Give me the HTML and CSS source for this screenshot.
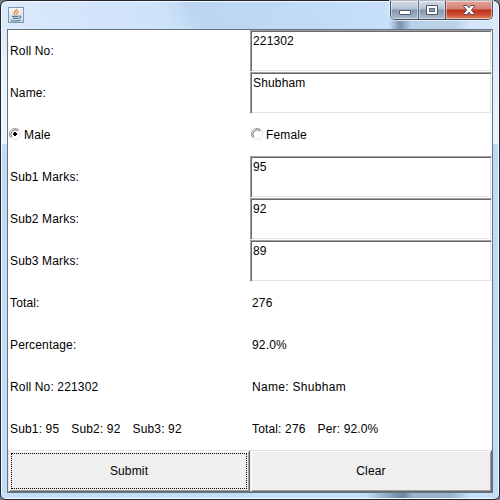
FILE: index.html
```html
<!DOCTYPE html>
<html lang="en">
<head>
<meta charset="utf-8">
<title>Student Marks</title>
<link rel="stylesheet" href="styles.css">
</head>
<body>
<div class="window">
  <header class="titlebar">
    <svg class="app-icon" width="16" height="16" viewBox="0 0 16 16">
      <defs><linearGradient id="tile" x1="0" y1="0" x2="0" y2="1"><stop offset="0" stop-color="#f8fafb"/><stop offset="1" stop-color="#c3d5e0"/></linearGradient></defs>
      <rect x=".5" y=".5" width="15" height="15" fill="url(#tile)" stroke="#8199aa"/>
      <path d="M8.8 1.8C9.3 4 5.3 4.6 6.2 6.5L7.3 8M10.8 4C7.8 5.3 9.8 6 8.5 7.6" fill="none" stroke="#ee7d24" stroke-width="1.2"/>
      <path d="M4 9.4h6.5M5 11.4h5M11 9c2.5-.4 2 1.8-.2 2.2M3 13.4c2 .8 7.5.8 9.5-.3" fill="none" stroke="#567a95" stroke-width="1.1"/>
    </svg>
    <div class="controls">
      <div class="control minimize">
        <svg width="14" height="12" viewBox="0 0 14 12"><rect x="1.5" y="6.5" width="11" height="4" rx=".5" fill="#fff" stroke="#555c6b"/></svg>
      </div>
      <div class="control maximize">
        <svg width="14" height="12" viewBox="0 0 14 12"><path d="M1.5 1.5h11v9h-11zM4.5 4.5v3h5v-3z" fill="#fff" fill-rule="evenodd" stroke="#555c6b"/></svg>
      </div>
      <div class="control close">
        <svg width="14" height="12" viewBox="0 0 14 12"><path d="M1.7 1.5h3.4L7 3.7l1.9-2.2h3.4v1L9.4 6l2.9 3.5v1H8.9L7 8.3l-1.9 2.2H1.7v-1L4.6 6 1.7 2.5z" fill="#fff" stroke="#5a4753"/></svg>
      </div>
    </div>
  </header>
  <main class="form">
    <div class="label">Roll No:</div><div class="field">221302</div>
    <div class="label">Name:</div><div class="field">Shubham</div>
    <div class="choice">
      <svg class="radio" width="12" height="12" viewBox="0 0 12 12"><path d="M2 10A5.4 5.4 0 0 1 10 2" fill="none" stroke="#a0a0a0"/><path d="M2.9 9.1A4.4 4.4 0 0 1 9.1 2.9" fill="none" stroke="#696969"/><path d="M10 2A5.4 5.4 0 0 1 2 10" fill="none" stroke="#e3e3e3"/><path d="M5 4h2v1h1v2H7v1H5V7H4V5h1z"/></svg>
      <span>Male</span>
    </div>
    <div class="choice">
      <svg class="radio" width="12" height="12" viewBox="0 0 12 12"><path d="M2 10A5.4 5.4 0 0 1 10 2" fill="none" stroke="#a0a0a0"/><path d="M2.9 9.1A4.4 4.4 0 0 1 9.1 2.9" fill="none" stroke="#696969"/><path d="M10 2A5.4 5.4 0 0 1 2 10" fill="none" stroke="#e3e3e3"/></svg>
      <span>Female</span>
    </div>
    <div class="label">Sub1 Marks:</div><div class="field">95</div>
    <div class="label">Sub2 Marks:</div><div class="field">92</div>
    <div class="label">Sub3 Marks:</div><div class="field">89</div>
    <div class="label">Total:</div><div class="label">276</div>
    <div class="label">Percentage:</div><div class="label">92.0%</div>
    <div class="label">Roll No: 221302</div><div class="label name">Name: Shubham</div>
    <div class="label summary"><span>Sub1: 95</span><span>Sub2: 92</span><span>Sub3: 92</span></div>
    <div class="label summary"><span>Total: 276</span><span>Per: 92.0%</span></div>
    <div class="button"><div class="focus">Submit</div></div>
    <div class="button"><div class="face">Clear</div></div>
  </main>
</div>
</body>
</html>
```
FILE: styles.css
```css
* { box-sizing: border-box; }
body {
  margin: 0;
  width: 500px;
  height: 500px;
  overflow: hidden;
  background: #777b7e;
  font: 12px/14px "Liberation Sans", Arial, sans-serif;
  letter-spacing: .15px;
  color: #000;
}
.window {
  width: 500px;
  height: 500px;
  padding: 0 6px 6px;
  border: 1px solid #23242e;
  border-radius: 7px 7px 6px 6px;
  box-shadow: inset 0 0 0 1px #f2f9ff;
  background:
    linear-gradient(90deg, #c3dffa 0 365px, #8ba6c4 388px, #6d86a3 402px, #9ab3cf 412px, #9ab3cf 450px, #c3dffa 468px) bottom / 100% 7px no-repeat,
    linear-gradient(#d9e8fb 0 28px, #e8f2fd 60px, #ecf4fe 142px, #c1dbf6 144px, #c3ddf8 100%) 0 0 / 7px 100% no-repeat,
    linear-gradient(#d9e8fb 0 28px, #edf5fe 142px, #bfd9f5 144px, #c3ddf8 100%) 100% 0 / 7px 100% no-repeat,
    linear-gradient(90deg, transparent 388px, rgba(72, 94, 120, .6) 399px, rgba(130, 153, 180, .25) 410px, rgba(130, 153, 180, .25) 455px, transparent 468px) 0 0 / 100% 28px no-repeat,
    linear-gradient(60deg, #dce9fb 242px, #cfe3fb 360px, #cde3fb 384px, #bdd5ef 410px, #c0daf4 490px, #c7dff9 570px, #d8e8fb 670px);
}
.titlebar {
  display: flex;
  justify-content: space-between;
  height: 28px;
}
.app-icon { margin: 6px 0 0 1px; }
.controls {
  display: flex;
  width: 103px;
  height: 19px;
  border: 1px solid #4a5362;
  border-top: 0;
  border-radius: 0 0 5px 5px;
  box-shadow: 0 0 0 1px rgba(240, 248, 255, .7);
  overflow: hidden;
}
.control {
  display: flex;
  justify-content: center;
  padding-top: 3px;
  background: linear-gradient(#d4dde8 0, #b3c1d1 8px, #8496ac 9px, #a8bbcf 100%);
  box-shadow: inset 0 0 0 1px rgba(255, 255, 255, .45);
}
.minimize { width: 28px; border-right: 1px solid #5d6878; }
.maximize { width: 27px; border-right: 1px solid #5d4853; }
.close {
  width: 46px;
  background: linear-gradient(#e5a59a 0, #d48074 8px, #bd301a 9px, #cf5035 14px, #df8c65 100%);
}
.form {
  display: grid;
  grid-template-columns: 242px 242px;
  grid-template-rows: repeat(11, 42px);
  width: 486px;
  height: 464px;
  border: 1px solid #66727e;
  background: #fff;
}
.label {
  display: flex;
  align-items: center;
  padding-left: 2px;
}
.summary { gap: 12px; }
.name { letter-spacing: .3px; }
.field {
  padding: 3px 2px;
  border: 1px solid;
  border-color: #a0a0a0 #fff #fff #a0a0a0;
  box-shadow: inset 1px 1px #696969, inset -1px -1px #e3e3e3;
}
.choice {
  display: flex;
  align-items: center;
  gap: 3px;
  padding-left: 1px;
}
.radio { margin-top: -2px; }
.button {
  padding: 2px;
  background: #efefef;
  border: 1px solid;
  border-color: #e3e3e3 #696969 #696969 #e3e3e3;
  box-shadow: inset 1px 1px #fff, inset -1px -1px #a0a0a0;
}
.focus, .face {
  display: flex;
  align-items: center;
  justify-content: center;
  height: 100%;
}
.focus { border: 1px dotted #000; }
```
